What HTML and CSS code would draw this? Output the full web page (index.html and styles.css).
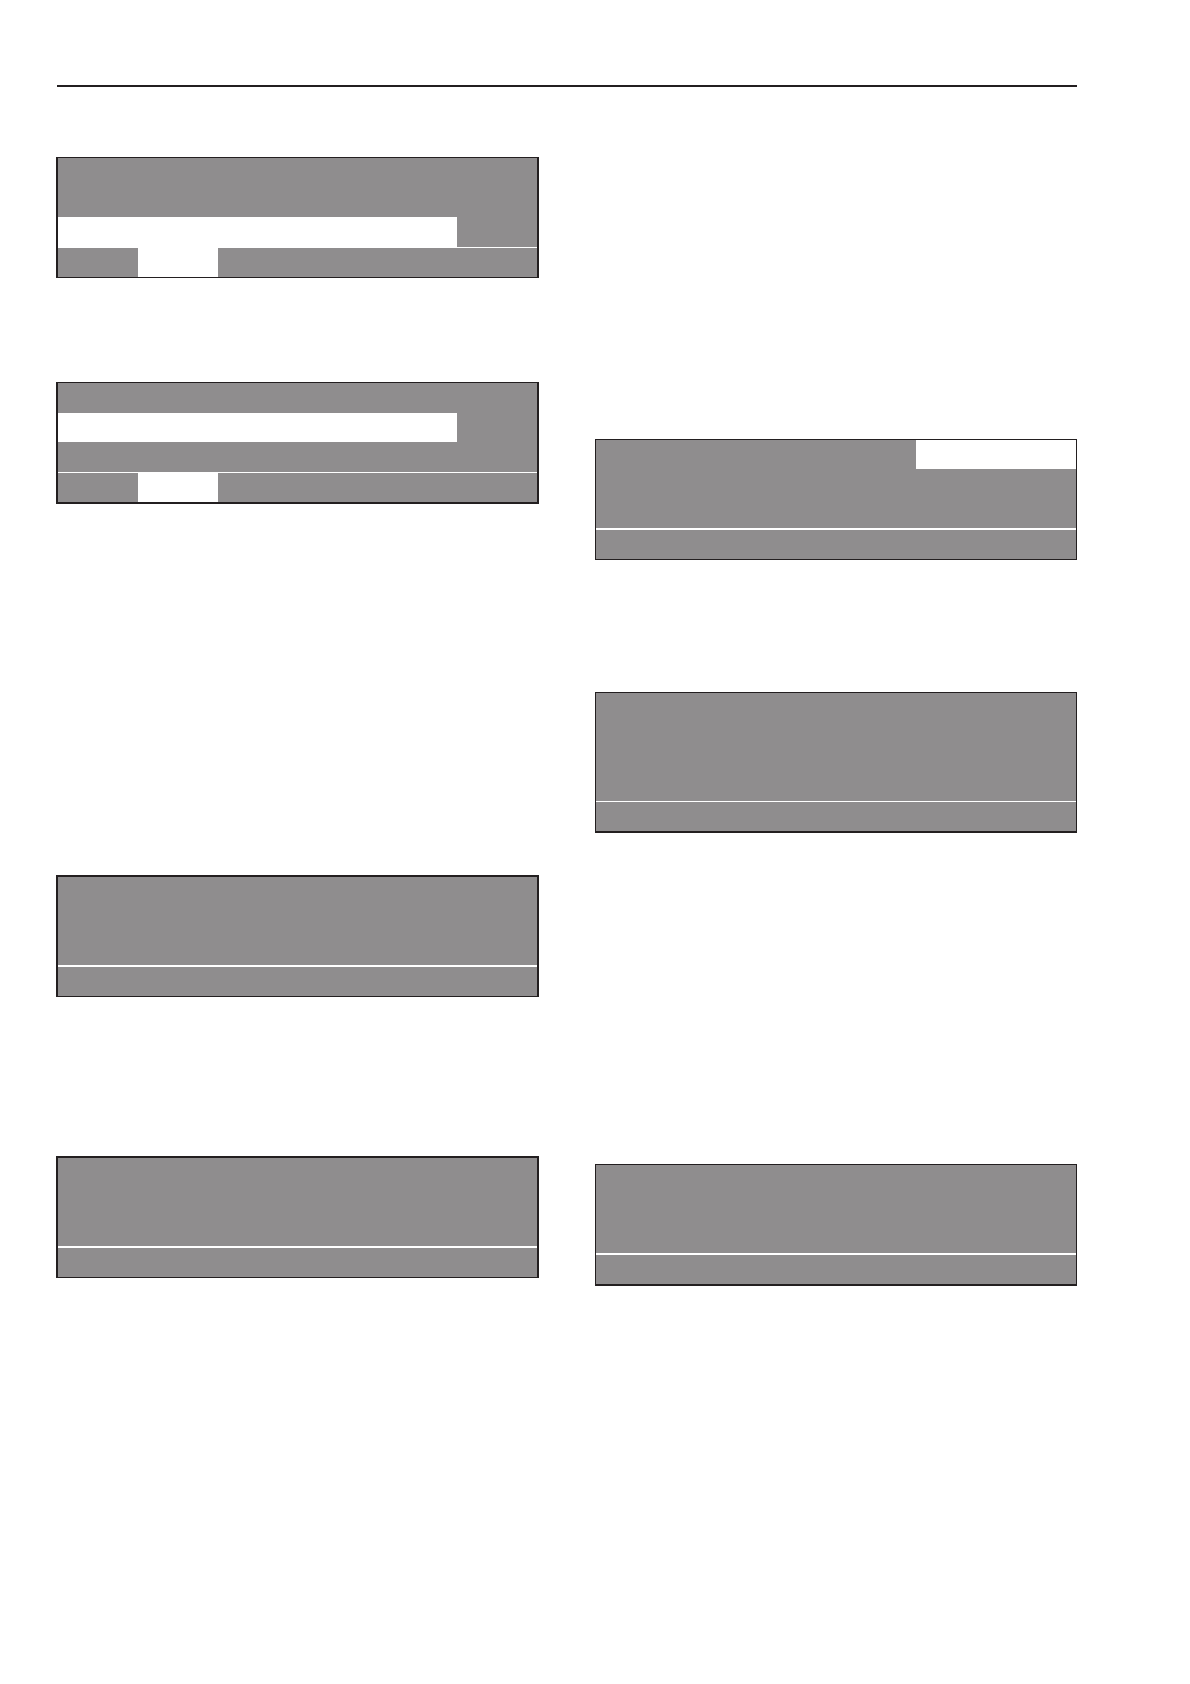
FILE: index.html
```html
<!DOCTYPE html>
<html lang="en">
<head>
    <meta charset="UTF-8">
    <meta name="viewport" content="width=device-width, initial-scale=1.0">
    <title>Display Panels</title>
    <link rel="stylesheet" href="styles.css">
</head>
<body>
    <hr class="rule">
    <main class="columns">
        <div class="column left">
            <div class="panel">
                <div class="lines">
                    <div class="line"></div>
                    <div class="line"></div>
                    <div class="line selected"></div>
                </div>
                <div class="keys">
                    <div class="key active"></div>
                </div>
            </div>

            <div class="panel thick-bottom second">
                <div class="lines">
                    <div class="line"></div>
                    <div class="line selected"></div>
                    <div class="line"></div>
                </div>
                <div class="keys">
                    <div class="key active"></div>
                </div>
            </div>

            <div class="panel thick-top third">
                <div class="lines short"></div>
                <div class="keys thick"></div>
            </div>

            <div class="panel thick-top fourth">
                <div class="lines short"></div>
                <div class="keys thick"></div>
            </div>
        </div>

        <div class="column right">
            <div class="panel first">
                <div class="lines short">
                    <div class="line value"></div>
                </div>
                <div class="keys thick"></div>
            </div>

            <div class="panel thick-bottom second">
                <div class="lines tall"></div>
                <div class="keys"></div>
            </div>

            <div class="panel thick-bottom third">
                <div class="lines short"></div>
                <div class="keys thick"></div>
            </div>
        </div>
    </main>
</body>
</html>
```

FILE: styles.css
```css
body {
    margin: 0;
    padding: 85px 113px 80px 56px;
    font-family: "Liberation Sans", Arial, sans-serif;
    background-color: #fff;
}
.rule {
    height: 2px;
    margin: 0 0 70px 1px;
    border: 0;
    background-color: #231f20;
}
.columns {
    display: grid;
    grid-template-columns: 1fr 1fr;
    gap: 56px;
}

/* display panel: text lines on top, soft keys below */
.panel {
    border: 1px solid #231f20;
    background-color: #8f8d8e;
}
.left .panel {
    border-left-width: 2px;
    border-right-width: 2px;
}
.panel.thick-top {
    border-top-width: 2px;
}
.panel.thick-bottom {
    border-bottom-width: 2px;
}
.lines {
    display: grid;
    grid-template-columns: repeat(6, 1fr);
    grid-template-rows: repeat(3, 1fr);
    height: 89px;
}
.lines.short {
    height: 88px;
}
.lines.tall {
    height: 108px;
}
.line {
    grid-column: 1 / -1;
}
.line.selected {
    grid-column: 1 / 6;
    background-color: #fff;
}
.line.value {
    grid-column: 5 / 7;
    background-color: #fff;
}
.keys {
    display: grid;
    grid-template-columns: repeat(6, 1fr);
    height: 29px;
    border-top: 1px solid #fff;
}
.keys.thick {
    border-top-width: 2px;
}
.key {
    grid-column: 2;
}
.key.active {
    background-color: #fff;
}

/* space between the panels */
.left .second {
    margin-top: 104px;
}
.left .third {
    margin-top: 371px;
}
.left .fourth {
    margin-top: 159px;
}
.right .first {
    margin-top: 282px;
}
.right .second {
    margin-top: 132px;
}
.right .third {
    margin-top: 331px;
}
```
